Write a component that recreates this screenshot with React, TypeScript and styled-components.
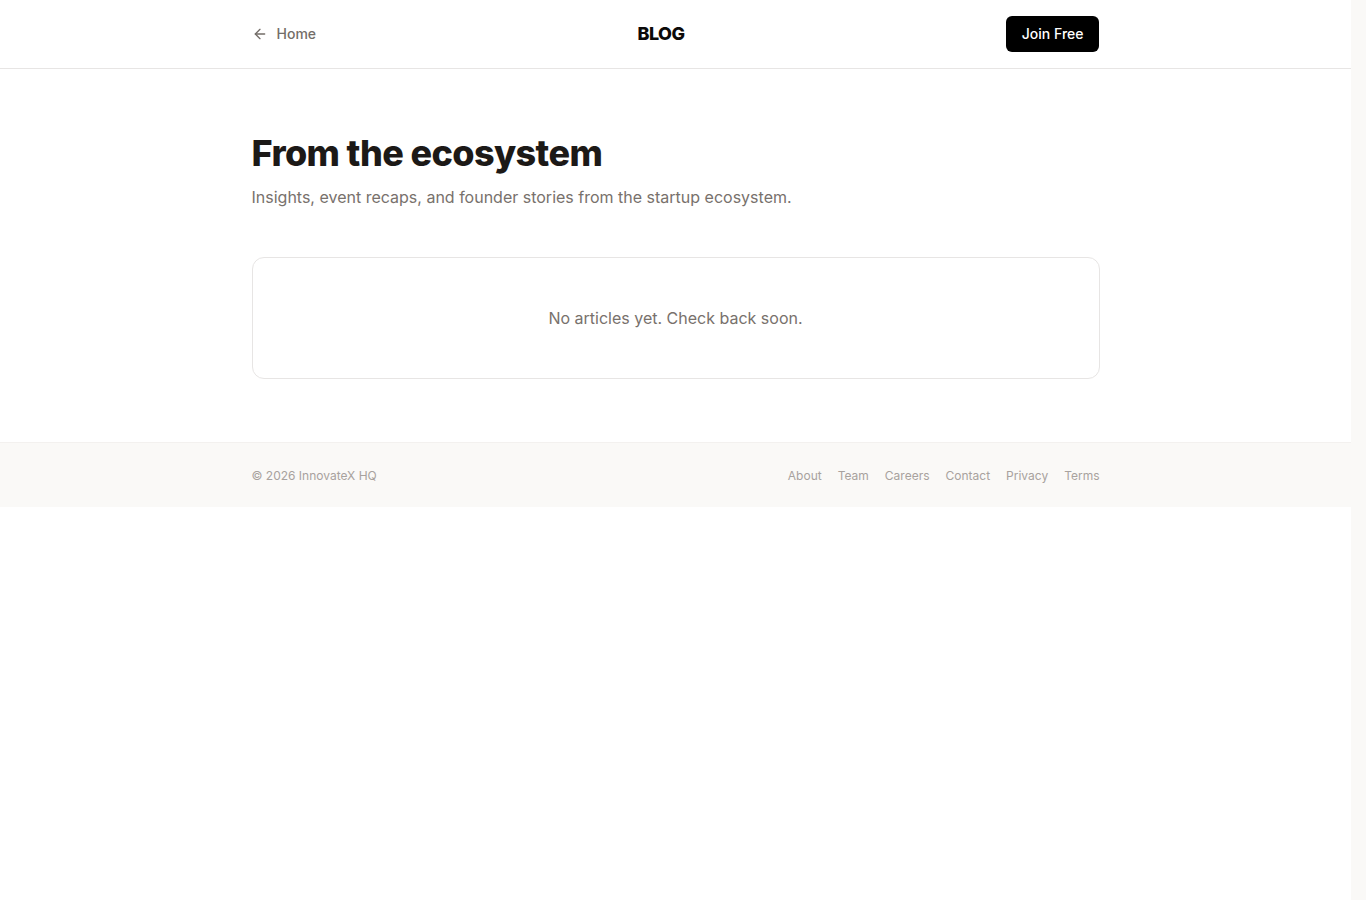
import styled, { createGlobalStyle } from "styled-components";

const GlobalStyle = createGlobalStyle`
  body {
    margin: 0;
    background: #ffffff;
    font-family: Inter, "Noto Sans", sans-serif;
    color: #1c1917;
    -webkit-font-smoothing: antialiased;
  }
  * {
    box-sizing: border-box;
  }
`;

const Page = styled.div`
  display: flex;
  min-height: 100vh;
`;

const Content = styled.div`
  flex: 1;
  min-width: 0;
`;

// empty scrollbar track on the right edge
const ScrollTrack = styled.div`
  flex: 0 0 15px;
  background: #faf9f7;
`;

const Header = styled.header`
  border-bottom: 1px solid #e7e5e4;
  background: #ffffff;
`;

const Inner = styled.div`
  max-width: 848px;
  margin: 0 auto;
`;

const HeaderRow = styled(Inner)`
  height: 68px;
  display: flex;
  align-items: center;
  justify-content: space-between;
`;

const BackLink = styled.a`
  display: flex;
  align-items: center;
  gap: 9px;
  font-size: 14px;
  font-weight: 500;
  line-height: 20px;
  color: #736d68;
  text-decoration: none;
  cursor: pointer;
  margin-top: -1px;
`;

const Brand = styled.span`
  font-size: 18px;
  line-height: 28px;
  font-weight: 800;
  letter-spacing: -0.03em;
  color: #0c0a09;
  margin-top: -1px;
`;

const JoinButton = styled.button`
  height: 36px;
  padding: 0 16px 1px;
  border: none;
  border-radius: 6px;
  background: #000000;
  color: #ffffff;
  font-family: inherit;
  font-size: 14px;
  font-weight: 500;
  cursor: pointer;
`;

const Main = styled(Inner)`
  padding: 64px 0 63px;
`;

const Title = styled.h1`
  margin: 0;
  font-size: 36px;
  line-height: 40px;
  font-weight: 800;
  letter-spacing: -0.017em;
  color: #1c1917;
`;

const Lead = styled.p`
  margin: 12px 0 0;
  font-size: 16px;
  line-height: 24px;
  color: #78716c;
`;

const EmptyCard = styled.div`
  margin-top: 48px;
  border: 1px solid #e7e5e4;
  border-radius: 12px;
  padding: 48px 24px;
  text-align: center;
  font-size: 16px;
  line-height: 24px;
  color: #78716c;
`;

const Footer = styled.footer`
  border-top: 1px solid #f3f1ef;
  background: #faf9f7;
`;

const FooterRow = styled(Inner)`
  height: 64px;
  display: flex;
  align-items: center;
  justify-content: space-between;
  font-size: 12px;
  color: #a8a29e;
`;

const FooterLinks = styled.nav`
  display: flex;
  gap: 16px;
`;

const FooterLink = styled.a`
  color: #a8a29e;
  text-decoration: none;
  cursor: pointer;
`;

const links = ["About", "Team", "Careers", "Contact", "Privacy", "Terms"];

export default function App() {
  return (
    <>
      <GlobalStyle />
      <Page>
        <Content>
          <Header>
            <HeaderRow>
              <BackLink>
                <svg width="16" height="16" viewBox="0 0 24 24" fill="none" stroke="currentColor" strokeWidth="2" strokeLinecap="round" strokeLinejoin="round">
                  <path d="M19 12H5" />
                  <path d="M12 19l-7-7 7-7" />
                </svg>
                Home
              </BackLink>
              <Brand>BLOG</Brand>
              <JoinButton>Join Free</JoinButton>
            </HeaderRow>
          </Header>
          <Main>
            <Title>From the ecosystem</Title>
            <Lead>Insights, event recaps, and founder stories from the startup ecosystem.</Lead>
            <EmptyCard>No articles yet. Check back soon.</EmptyCard>
          </Main>
          <Footer>
            <FooterRow>
              <span>© 2026 InnovateX HQ</span>
              <FooterLinks>
                {links.map((l) => (
                  <FooterLink key={l}>{l}</FooterLink>
                ))}
              </FooterLinks>
            </FooterRow>
          </Footer>
        </Content>
        <ScrollTrack />
      </Page>
    </>
  );
}
